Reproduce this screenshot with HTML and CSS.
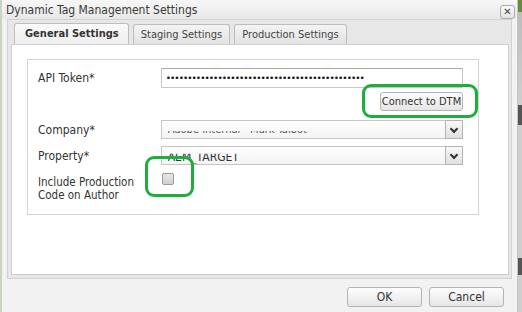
FILE: index.html
```html
<!DOCTYPE html>
<html lang="en">
<head>
    <meta charset="UTF-8">
    <title>Dynamic Tag Management Settings</title>
    <link rel="stylesheet" href="styles.css">
</head>
<body>
    <div class="page">
        <div class="dialog">
            <div class="titlebar">
                <span class="title">Dynamic Tag Management Settings</span>
                <span class="close">&#x2715;</span>
            </div>

            <div class="tabframe">
                <div class="tabs">
                    <div class="tab active">General Settings</div>
                    <div class="tab">Staging Settings</div>
                    <div class="tab">Production Settings</div>
                </div>

                <div class="panel">
                    <div class="fieldset">
                        <div class="row">
                            <label class="label">API Token<span class="req">*</span></label>
                            <div class="input">&bull;&bull;&bull;&bull;&bull;&bull;&bull;&bull;&bull;&bull;&bull;&bull;&bull;&bull;&bull;&bull;&bull;&bull;&bull;&bull;&bull;&bull;&bull;&bull;&bull;&bull;&bull;&bull;&bull;&bull;&bull;&bull;&bull;&bull;&bull;&bull;&bull;&bull;&bull;&bull;&bull;&bull;&bull;&bull;&bull;&bull;</div>
                        </div>
                        <div class="connect-row">
                            <button class="btn connect">Connect to DTM</button>
                            <div class="highlight hl-connect"></div>
                        </div>
                        <div class="row row-company">
                            <label class="label">Company<span class="req">*</span></label>
                            <div class="select">
                                <span class="value cut">Adobe Internal - Mark Talbot</span>
                                <span class="arrow"></span>
                            </div>
                        </div>
                        <div class="row row-property">
                            <label class="label">Property<span class="req">*</span></label>
                            <div class="select">
                                <span class="value cut-top">AEM_TARGET</span>
                                <span class="arrow"></span>
                            </div>
                        </div>
                        <div class="row row-check">
                            <div class="label two-line">
                                <div>Include Production</div>
                                <div>Code on Author</div>
                            </div>
                            <div class="check-wrap">
                                <span class="checkbox"></span>
                                <div class="highlight hl-check"></div>
                            </div>
                        </div>
                    </div>
                </div>
            </div>

            <div class="footer">
                <button class="btn foot">OK</button>
                <button class="btn foot">Cancel</button>
            </div>
        </div>
        <div class="edge"></div>
    </div>
</body>
</html>
```

FILE: styles.css
```css
* {
    box-sizing: border-box;
}

body {
    margin: 0;
    font-family: "DejaVu Sans Condensed", "DejaVu Sans", sans-serif;
    font-size: 11px;
    color: #333;
    background-color: #d6d6d6;
}

.page {
    display: flex;
    width: 522px;
    height: 312px;
    overflow: hidden;
}

.dialog {
    width: 518px;
    height: 312px;
    background-color: #f2f2f2;
    border-left: 2px solid #c9d3c6;
    border-right: 1px solid #c4c4c4;
    display: flex;
    flex-direction: column;
}

.edge {
    width: 4px;
    background: linear-gradient(#5f8f3a 0, #5f8f3a 12px, #bdbdbd 12px, #cfcfcf 105px, #555 105px, #555 125px, #cfcfcf 125px, #cfcfcf 258px, #555 258px, #555 275px, #cfcfcf 275px);
}

.titlebar {
    height: 19px;
    display: flex;
    align-items: center;
    justify-content: space-between;
    padding: 0 2px 0 4px;
    background: linear-gradient(#f7f7f7, #e8e8e8);
}

.title {
    font-size: 12px;
    color: #3a3a3a;
}

.close {
    width: 15px;
    height: 14px;
    border: 1px solid #a9a9a9;
    border-radius: 3px;
    background: linear-gradient(#fbfbfb, #e4e4e4);
    font-family: "DejaVu Sans", sans-serif;
    font-size: 10px;
    line-height: 12px;
    text-align: center;
    color: #444;
    margin-top: 4px;
}

.tabframe {
    margin-left: 5px;
    width: 505px;
    height: 260px;
    border: 1px solid #d2d2d2;
    background-color: #e7e7e7;
    padding: 2px 2px 3px 3px;
    display: flex;
    flex-direction: column;
}

.tabs {
    display: flex;
    gap: 4px;
    padding-left: 3px;
    height: 22px;
    align-items: flex-end;
}

.tab {
    height: 20px;
    padding: 0 7px;
    border: 1px solid #bdbdbd;
    border-bottom: none;
    border-radius: 3px 3px 0 0;
    background: linear-gradient(#f4f4f4, #e2e2e2);
    line-height: 19px;
    font-size: 11px;
    color: #444;
}

.tab.active {
    font-weight: bold;
    height: 21px;
    padding: 0 9px 0 10px;
    background: linear-gradient(#fafafa, #eeeeee);
    color: #333;
}

.panel {
    flex: 1;
    background-color: #fff;
    border: 1px solid #cfcfcf;
    padding: 14px 29px 0 15px;
}

.fieldset {
    border: 1px solid #d4d4d4;
    height: 156px;
    padding: 8px 15px 0 10px;
}

.row {
    display: flex;
    align-items: center;
}

.label {
    width: 123px;
    font-size: 12px;
    color: #333;
    white-space: nowrap;
}

.req {
    color: #333;
}

.input {
    width: 303px;
    height: 20px;
    border: 1px solid #c6c6c6;
    border-top-color: #a9a9a9;
    padding-left: 4px;
    font-family: "DejaVu Sans", sans-serif;
    font-size: 9px;
    line-height: 18px;
    letter-spacing: -1px;
    color: #111;
    overflow: hidden;
    white-space: nowrap;
}

.connect-row {
    position: relative;
    display: flex;
    justify-content: flex-end;
    padding: 4px 15px 0 0;
    margin-right: -15px;
    height: 32px;
}

.btn {
    font-family: "DejaVu Sans Condensed", "DejaVu Sans", sans-serif;
    border: 1px solid #b4b4b4;
    border-radius: 3px;
    background: linear-gradient(#fdfdfd, #e6e6e6);
    color: #333;
    padding: 0;
    white-space: nowrap;
}

.connect {
    width: 83px;
    height: 19px;
    font-size: 11px;
}

.highlight {
    position: absolute;
    border: 3px solid #1fae3e;
    border-radius: 9px;
}

.hl-connect {
    right: 0;
    top: -4px;
    width: 116px;
    height: 34px;
}

.select {
    width: 303px;
    height: 19px;
    border: 1px solid #c6c6c6;
    background: linear-gradient(#fdfdfd, #f4f4f4);
    position: relative;
    display: flex;
    align-items: center;
    padding-left: 6px;
}

.value {
    font-size: 12px;
    color: #333;
}

.cut {
    clip-path: inset(62% 0 0 0);
    color: #555;
    font-size: 11px;
}

.cut-top {
    clip-path: inset(30% 0 0 0);
    margin-top: 2px;
}

.arrow {
    position: absolute;
    right: -1px;
    top: -1px;
    width: 18px;
    height: 19px;
    border: 1px solid #b4b4b4;
    background: linear-gradient(#f8f8f8, #e0e0e0);
}

.arrow::after {
    content: "";
    position: absolute;
    left: 5px;
    top: 5px;
    width: 4px;
    height: 4px;
    border-right: 2px solid #333;
    border-bottom: 2px solid #333;
    transform: rotate(45deg);
}

.row-property {
    margin-top: 7px;
}

.row-check {
    margin-top: 10px;
    align-items: flex-start;
}

.two-line {
    font-size: 11.5px;
    line-height: 13px;
    padding-top: 1px;
}

.check-wrap {
    position: relative;
    margin-top: -2px;
    padding-left: 1px;
}

.checkbox {
    display: block;
    width: 12px;
    height: 12px;
    border: 1px solid #9a9a9a;
    border-radius: 2px;
    background: linear-gradient(#e8e8e8, #d0d0d0);
}

.hl-check {
    left: -16px;
    top: -17px;
    width: 49px;
    height: 41px;
}

.footer {
    flex: 1;
    display: flex;
    justify-content: flex-end;
    gap: 7px;
    padding: 8px 13px 0 0;
}

.foot {
    width: 75px;
    height: 20px;
    font-size: 12px;
}
```
